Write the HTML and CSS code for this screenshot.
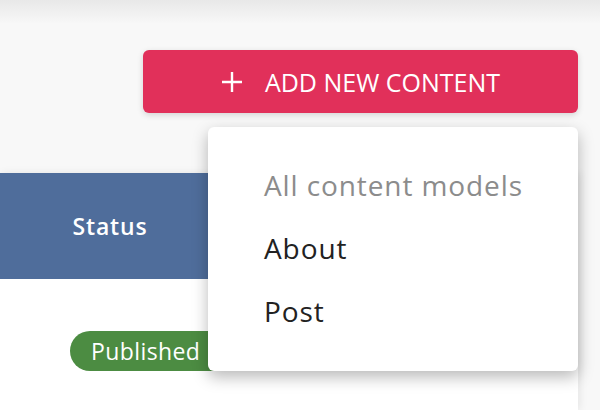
FILE: index.html
```html
<!DOCTYPE html>
<html lang="en">
<head>
    <meta charset="UTF-8">
    <meta name="viewport" content="width=device-width, initial-scale=1.0">
    <title>Content</title>
    <link rel="stylesheet" href="styles.css">
</head>
<body>
    <div class="top-shade"></div>
    <div class="toolbar">
        <div class="add-menu">
            <button class="add-btn" type="button">
                <svg class="plus" width="22" height="22" viewBox="0 0 22 22">
                    <path d="M11 1v20M1 11h20" stroke="#fff" stroke-width="2.4" fill="none"/>
                </svg>
                <span>ADD NEW CONTENT</span>
            </button>
            <ul class="menu">
                <li class="menu-item muted">All content models</li>
                <li class="menu-item">About</li>
                <li class="menu-item">Post</li>
            </ul>
        </div>
    </div>
    <div class="table-card">
        <div class="table-head">
            <div class="cell">Status</div>
        </div>
        <div class="table-row">
            <span class="badge">Published</span>
        </div>
    </div>
</body>
</html>
```
FILE: styles.css
```css
body {
    margin: 0;
    padding: 0;
    background-color: #f8f8f8;
    font-family: 'Open Sans', sans-serif;
    color: #222;
    overflow: hidden;
}

.top-shade {
    height: 24px;
    background: linear-gradient(#e8e8e8, #f8f8f8);
}

.toolbar {
    display: flex;
    justify-content: flex-end;
    padding: 26px 22px 0 0;
}

.add-menu {
    position: relative;
}

.add-btn {
    width: 435px;
    height: 63px;
    display: flex;
    align-items: center;
    justify-content: center;
    gap: 22px;
    padding: 0;
    border: none;
    border-radius: 6px;
    background-color: #e1305a;
    color: #fff;
    font-family: inherit;
    font-size: 25px;
    font-weight: 500;
    box-shadow: 0 2px 6px rgba(0, 0, 0, 0.15);
    cursor: pointer;
}

.menu {
    position: absolute;
    right: 0;
    top: calc(100% + 14px);
    width: 370px;
    margin: 0;
    padding: 26px 0 29px;
    list-style: none;
    background: #fff;
    border-radius: 6px;
    box-shadow: 0 6px 16px rgba(0, 0, 0, 0.28);
    z-index: 2;
}

.menu-item {
    height: 63px;
    display: flex;
    align-items: center;
    padding-left: 56px;
    font-size: 28px;
    letter-spacing: 0.9px;
    color: #222;
}

.menu-item.muted {
    color: #8c8c8c;
}

.table-card {
    margin: 60px 22px 0 0;
    background: #fff;
    box-shadow: 2px 0 8px rgba(0, 0, 0, 0.08);
    height: 237px;
}

.table-head {
    height: 106px;
    display: flex;
    align-items: center;
    background-color: #4f6d9b;
    color: #fff;
}

.cell {
    width: 220px;
    text-align: center;
    font-size: 23px;
    font-weight: 600;
    letter-spacing: 0.8px;
}

.table-row {
    padding: 52px 0 0 70px;
}

.badge {
    display: inline-block;
    height: 40px;
    line-height: 40px;
    padding: 0 40px 0 21px;
    border-radius: 20px;
    background-color: #4c8c42;
    color: #fff;
    font-size: 23px;
    letter-spacing: 0.4px;
}
```
